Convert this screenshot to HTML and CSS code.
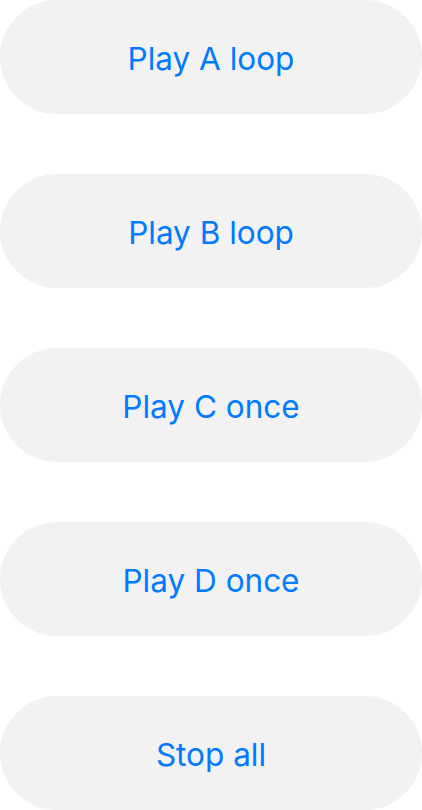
FILE: index.html
```html
<!DOCTYPE html>
<html>
<head>
<meta charset="utf-8">
<link rel="stylesheet" href="styles.css">
</head>
<body>
<div class="list">
  <button class="btn">Play A loop</button>
  <button class="btn">Play B loop</button>
  <button class="btn">Play C once</button>
  <button class="btn">Play D once</button>
  <button class="btn">Stop all</button>
</div>
</body>
</html>
```
FILE: styles.css
```css
html, body {
  margin: 0;
  padding: 0;
  background: #ffffff;
}
.list {
  display: flex;
  flex-direction: column;
  gap: 60px;
  width: 422px;
}
.btn {
  height: 114px;
  width: 100%;
  border: none;
  border-radius: 57px;
  background: #f2f2f2;
  color: #007aff;
  font-family: Inter, "Noto Sans", sans-serif;
  font-size: 31.5px;
  font-weight: 400;
  letter-spacing: 0;
  padding: 2px 0 0;
  display: flex;
  align-items: center;
  justify-content: center;
}
```
